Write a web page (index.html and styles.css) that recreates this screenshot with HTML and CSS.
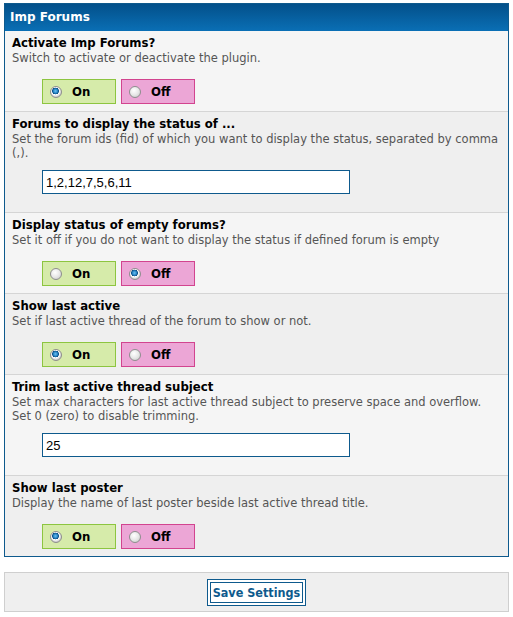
FILE: index.html
```html
<!DOCTYPE html>
<html>
<head>
<meta charset="utf-8">
<link rel="stylesheet" href="styles.css">
</head>
<body>
<div class="panel">
  <div class="panel-head">Imp Forums</div>

  <div class="row light opt">
    <div class="title">Activate Imp Forums?</div>
    <div class="desc">Switch to activate or deactivate the plugin.</div>
    <div class="choices">
      <label class="choice on"><input type="radio" name="r1" checked><span>On</span></label>
      <label class="choice off"><input type="radio" name="r1"><span>Off</span></label>
    </div>
  </div>

  <div class="row dark inp">
    <div class="title">Forums to display the status of ...</div>
    <div class="desc">Set the forum ids (fid) of which you want to display the status, separated by comma (,).</div>
    <div class="field"><input class="text" type="text" value="1,2,12,7,5,6,11"></div>
  </div>

  <div class="row light opt">
    <div class="title">Display status of empty forums?</div>
    <div class="desc">Set it off if you do not want to display the status if defined forum is empty</div>
    <div class="choices">
      <label class="choice on"><input type="radio" name="r3"><span>On</span></label>
      <label class="choice off"><input type="radio" name="r3" checked><span>Off</span></label>
    </div>
  </div>

  <div class="row dark opt">
    <div class="title">Show last active</div>
    <div class="desc">Set if last active thread of the forum to show or not.</div>
    <div class="choices">
      <label class="choice on"><input type="radio" name="r4" checked><span>On</span></label>
      <label class="choice off"><input type="radio" name="r4"><span>Off</span></label>
    </div>
  </div>

  <div class="row light inp">
    <div class="title">Trim last active thread subject</div>
    <div class="desc">Set max characters for last active thread subject to preserve space and overflow.<br>Set 0 (zero) to disable trimming.</div>
    <div class="field"><input class="text" type="text" value="25"></div>
  </div>

  <div class="row dark opt last">
    <div class="title">Show last poster</div>
    <div class="desc">Display the name of last poster beside last active thread title.</div>
    <div class="choices">
      <label class="choice on"><input type="radio" name="r6" checked><span>On</span></label>
      <label class="choice off"><input type="radio" name="r6"><span>Off</span></label>
    </div>
  </div>
</div>

<div class="buttons">
  <button class="save" type="button">Save Settings</button>
</div>
</body>
</html>
```

FILE: styles.css
```css
html, body {
  margin: 0;
  padding: 0;
  background: #ffffff;
}

body {
  padding: 3px 4px 0 4px;
  font-family: "DejaVu Sans", Verdana, sans-serif;
  color: #000;
}

.panel {
  border: 1px solid #0e5a8d;
}

.panel-head {
  height: 27px;
  line-height: 26px;
  padding-left: 5px;
  background: linear-gradient(#03508a, #0a6fb5);
  color: #fff;
  font-weight: bold;
  font-size: 12px;
}

.row {
  padding: 4px 5px 7px 7px;
  border-top: 1px solid #d5d5d5;
}

.panel-head + .row {
  border-top: 0;
}

.row.light { background: #f5f5f5; }
.row.dark { background: #efefef; }

.row.inp { padding-bottom: 18px; }

.title {
  font-family: "DejaVu Sans Condensed", "DejaVu Sans", sans-serif;
  font-size: 13px;
  font-weight: bold;
  line-height: 16px;
}

.desc {
  font-size: 11.5px;
  line-height: 14px;
  color: #555;
}

.choices {
  display: flex;
  gap: 5px;
  margin-top: 14px;
  padding-left: 30px;
}

.choice {
  box-sizing: border-box;
  width: 74px;
  height: 25px;
  display: flex;
  align-items: center;
  padding-left: 7px;
  font-family: "DejaVu Sans Condensed", "DejaVu Sans", sans-serif;
  font-size: 13px;
  font-weight: bold;
  color: #000;
}

.choice.on {
  background: #d6ebaa;
  border: 1px solid #8dc540;
}

.choice.off {
  background: #eca6d6;
  border: 1px solid #d2448f;
}

.choice input {
  appearance: none;
  -webkit-appearance: none;
  margin: 0 10px 0 0;
  width: 12px;
  height: 12px;
  border-radius: 50%;
  border: 1px solid #8e8e8e;
  background: radial-gradient(circle at 40% 35%, #ffffff 0%, #e8e8e8 50%, #c4c4c4 100%);
  box-sizing: border-box;
  flex: none;
}

.choice input:checked {
  background:
    radial-gradient(circle at 45% 40%, #6fc2f2 0, #2a88c8 2px, #0c4f86 3.2px, #ffffff 3.6px, #f0f0f0 4.4px, #c8c8c8 6px);
}

.field {
  margin-top: 10px;
  padding-left: 30px;
}

.text {
  box-sizing: border-box;
  width: 308px;
  height: 24px;
  margin: 0;
  border: 1px solid #0e5a8d;
  padding: 0 3px;
  background: #fff;
  font-family: "Liberation Sans", Arial, sans-serif;
  font-size: 13px;
  color: #000;
  outline: none;
}

.buttons {
  margin-top: 15px;
  height: 38px;
  border: 1px solid #cfcfcf;
  background: #efefef;
  display: flex;
  justify-content: center;
  align-items: center;
}

.save {
  width: 99px;
  height: 27px;
  margin-top: 0;
  padding: 0;
  border: 1px solid #0e5a8d;
  box-shadow: inset 0 0 0 2px #fff, inset 0 0 0 3px #0e5a8d;
  background: #fff;
  color: #0e5a8d;
  font-family: "DejaVu Sans Condensed", "DejaVu Sans", sans-serif;
  font-weight: bold;
  font-size: 12.5px;
}
```
